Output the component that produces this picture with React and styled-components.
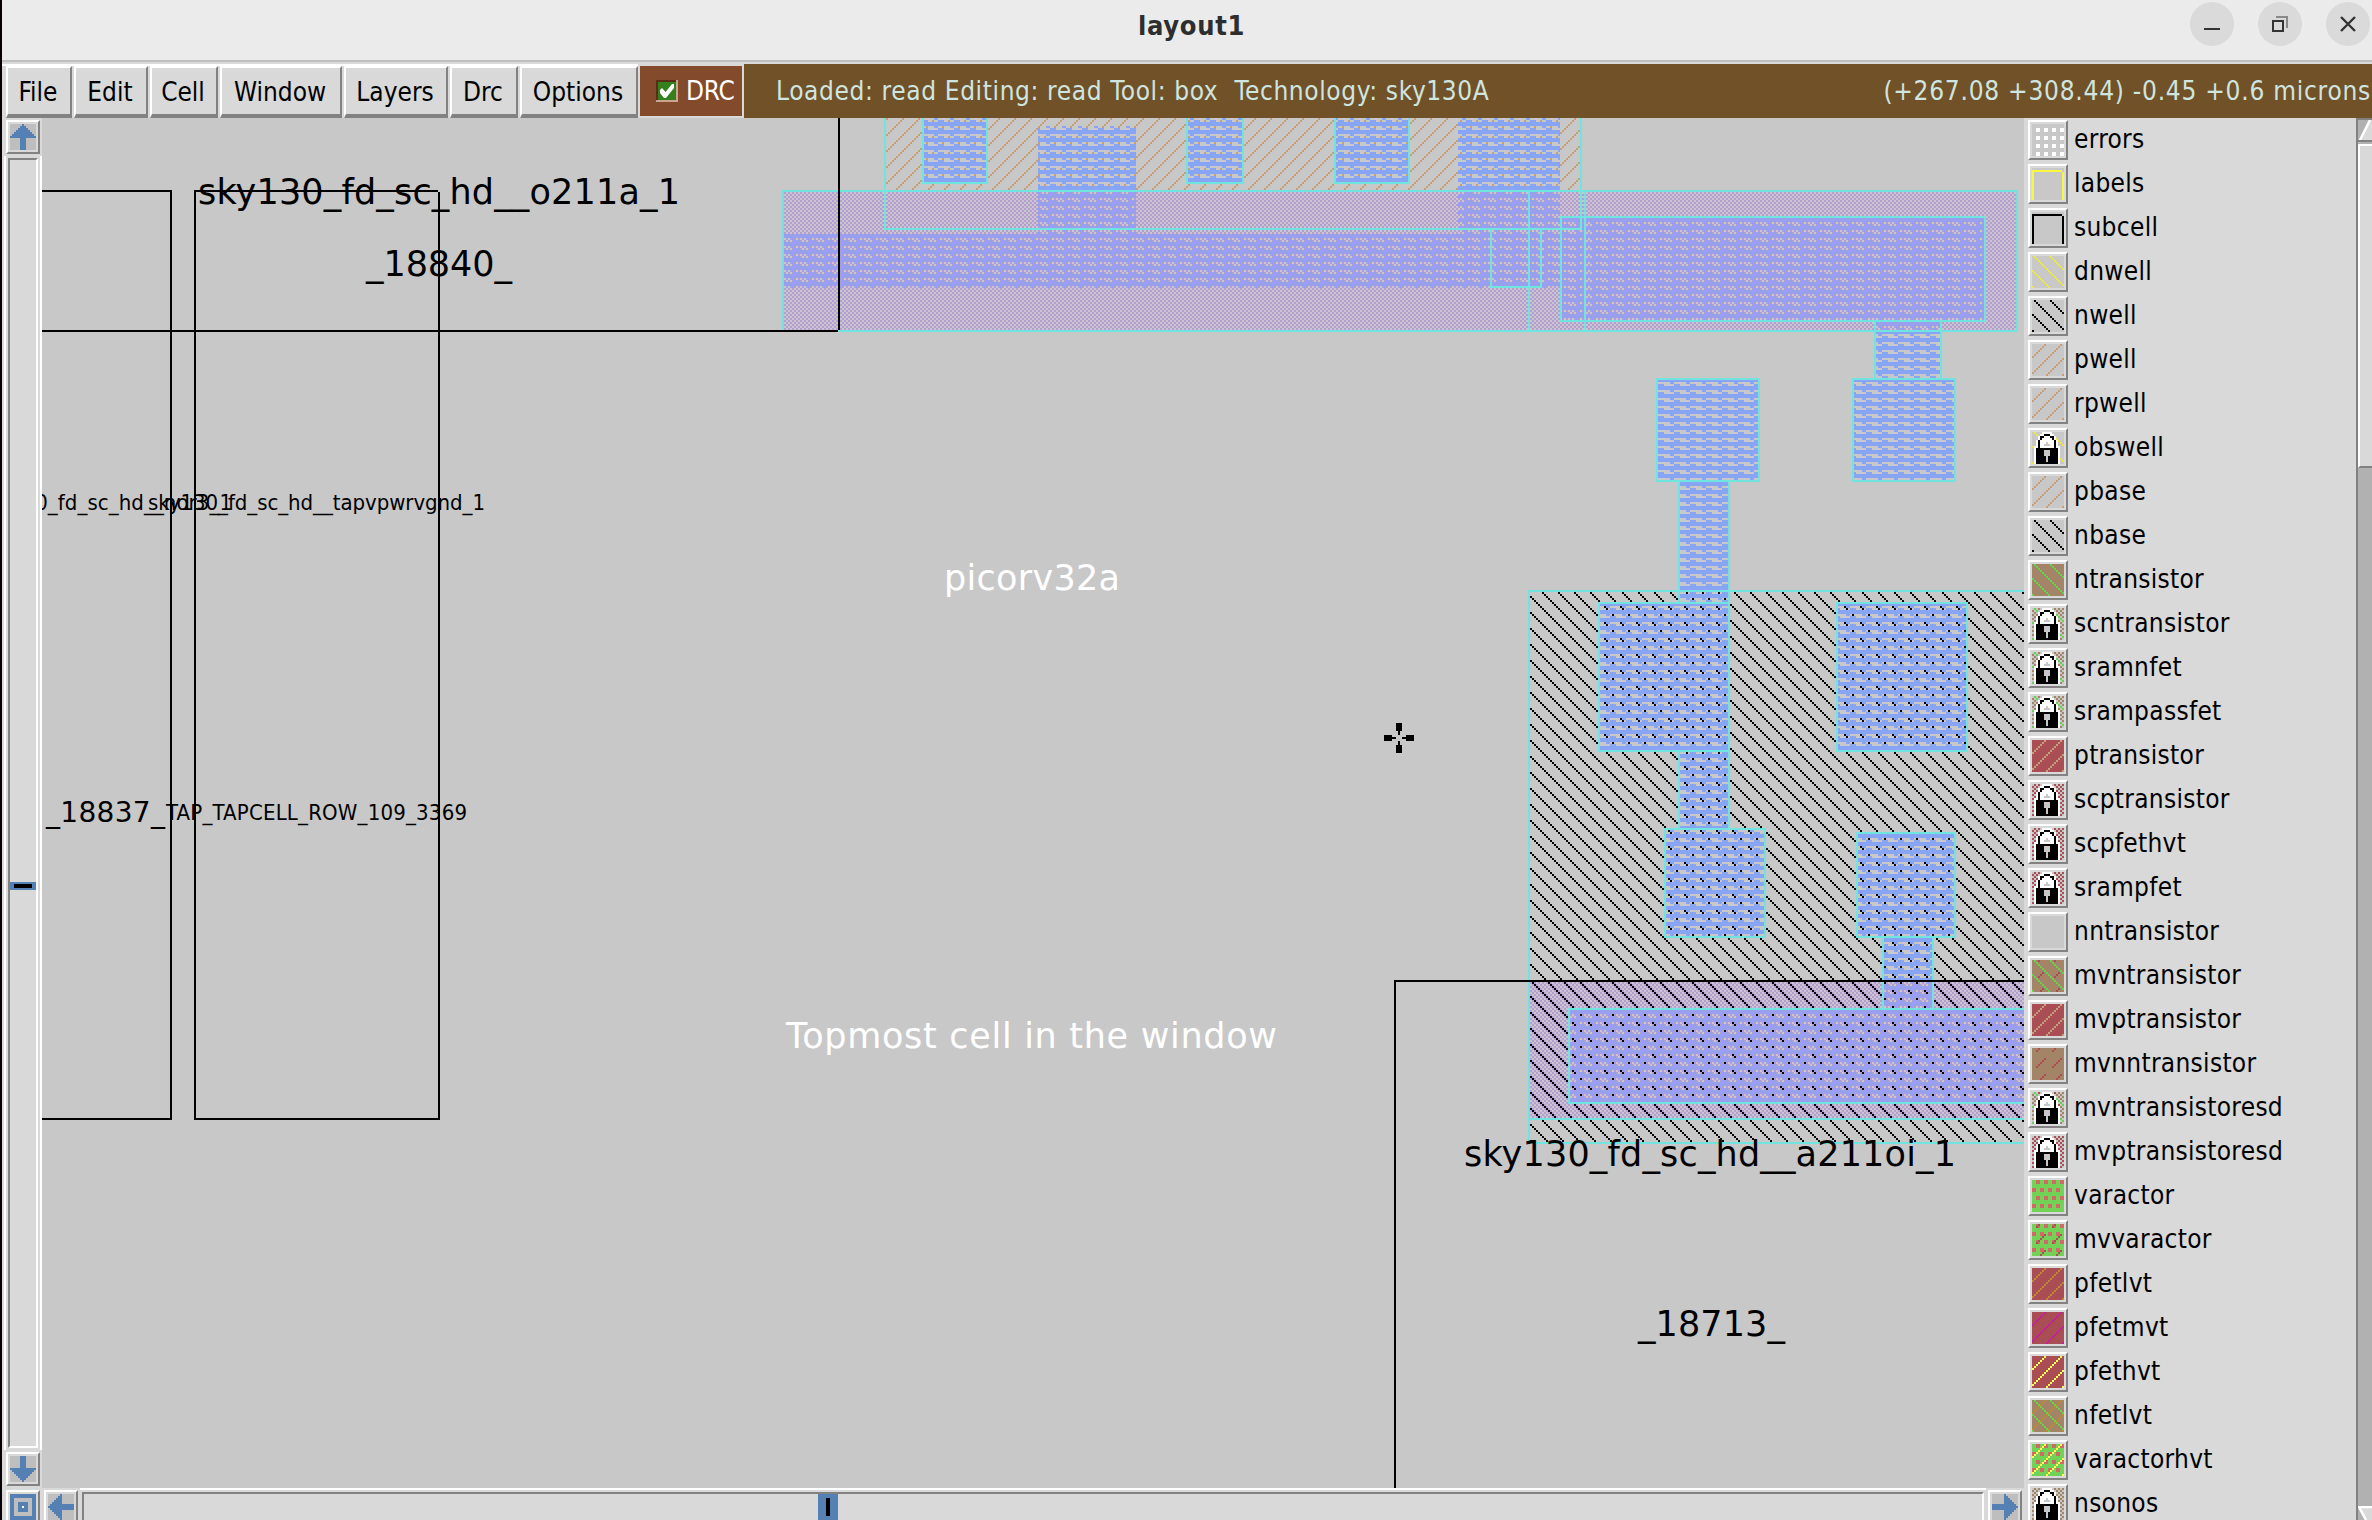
import React from "react";
import styled, { createGlobalStyle } from "styled-components";

const Global = createGlobalStyle`
  html, body { margin: 0; padding: 0; background: #d9d9d9; }
  * { box-sizing: border-box; }
`;

const UI = `"DejaVu Sans Condensed", "DejaVu Sans", sans-serif`;
const FACE = "#d9d9d9";
const DARK = "#828282";
const BLUE = "#5580b3";
const PAPER = "#c8c8c8";

const Window = styled.div`
  width: 2372px;
  height: 1520px;
  overflow: hidden;
  display: flex;
  flex-direction: column;
  background: ${FACE};
  border-left: 2px solid #060006;
  font-family: ${UI};
  font-size: 26px;
  color: #000;
`;

const TitleBar = styled.header`
  height: 62px;
  flex: none;
  display: grid;
  grid-template-columns: 1fr auto 1fr;
  background: #ebebeb;
  border-bottom: 2px solid #bfbfbf;
  padding: 2px 2px 0 0;
`;

const Title = styled.h1`
  grid-column: 2;
  margin: 5px 0 0 11px;
  font: bold 27px/38px ${UI};
  letter-spacing: 0.7px;
  color: #2e2e2e;
`;

const Controls = styled.div`
  display: flex;
  justify-content: flex-end;
  gap: 24px;
`;

const Round = styled.button`
  width: 44px;
  height: 44px;
  padding: 0;
  border: 0;
  border-radius: 50%;
  background: #dadada;
  display: block;
`;

const MenuBar = styled.nav`
  height: 56px;
  flex: none;
  display: flex;
  padding-top: 2px;
`;

const Menus = styled.div`
  display: flex;
  gap: 2px;
  padding-left: 4px;
  width: 636px;
  border-top: 2px solid #fff;
`;

const MenuButton = styled.button`
  width: ${(p) => p.$w}px;
  height: 52px;
  padding: 1px 2px 0 0;
  border: solid;
  border-width: 2px 2px 4px;
  border-color: #fff ${DARK} ${DARK} #fff;
  background: ${FACE};
  font: 26px/44px ${UI};
  color: #000;
`;

const DrcToggle = styled.label`
  width: 102px;
  height: 50px;
  margin: 2px 2px 0 2px;
  padding: 0 0 0 16px;
  display: flex;
  align-items: center;
  gap: 8px;
  background: #834a2c;
  color: #fff;
  font-size: 26px;
  letter-spacing: -0.2px;
`;

const Status = styled.div`
  flex: 1;
  display: flex;
  justify-content: space-between;
  padding: 0 1px 0 32px;
  background: #715127;
  color: #cfe5e0;
  line-height: 55px;
  white-space: pre;
`;

const StatusText = styled.span`
  letter-spacing: ${(p) => p.$ls}px;
`;

const Body = styled.main`
  height: 1402px;
  display: grid;
  grid-template-columns: 40px 1982px 1fr;
`;

const LeftRail = styled.div`
  display: flex;
  flex-direction: column;
  padding-top: 2px;
`;

const Bevel = styled.div`
  width: 34px;
  height: 34px;
  flex: none;
  margin: ${(p) => p.$m || "0"};
  border: 2px solid;
  border-color: #fff ${DARK} ${DARK} #fff;
  padding: 2px;
  svg { display: block; background: #bebebe; }
`;

const VTrack = styled.div`
  height: 1294px;
  margin: 2px 0 2px 2px;
  border: solid #fff;
  border-width: 0 2px;
  padding: 2px;
`;

const VTrough = styled.div`
  width: 30px;
  height: 1290px;
  border: 2px solid;
  border-color: ${DARK} #fff #fff ${DARK};
  padding-top: 722px;
`;

const VThumb = styled.div`
  width: 26px;
  height: 8px;
  background: #000;
  border: solid ${BLUE};
  border-width: 2px 4px;
`;

const Center = styled.section`
  display: flex;
  flex-direction: column;
`;

const HRail = styled.div`
  height: 32px;
  display: flex;
`;

const HTrack = styled.div`
  width: 1906px;
  height: 40px;
  border-top: 2px solid #fff;
  padding: 2px 2px 0;
`;

const HTrough = styled.div`
  height: 36px;
  border: 2px solid;
  border-color: ${DARK} #fff #fff ${DARK};
  padding-left: 734px;
`;

const HThumb = styled.div`
  width: 20px;
  height: 26px;
  background: #000;
  border: solid ${BLUE};
  border-width: 4px 8px;
`;

const LayerPanel = styled.aside`
  display: flex;
  justify-content: space-between;
  height: 1402px;
  overflow: hidden;
`;

const LayerList = styled.ul`
  list-style: none;
  margin: 0;
  padding: 2px 0 0 4px;
  display: flex;
  flex-direction: column;
  gap: 4px;
`;

const LayerRow = styled.li`
  display: flex;
  height: 40px;
  align-items: center;
`;

const LayerName = styled.span`
  margin-left: 6px;
  line-height: 38px;
  padding-bottom: 2px;
  letter-spacing: 0.3px;
`;

const Swatch = styled.div`
  width: 40px;
  height: 40px;
  border: 2px solid;
  border-color: #fff ${DARK} ${DARK} #fff;
  padding: 2px;
  svg { display: block; }
`;

const ScrollBar = styled.div`
  width: 16px;
  height: 1402px;
  background: #b1b1b1;
  border-left: 2px solid ${DARK};
  border-top: 2px solid ${DARK};
  display: flex;
  flex-direction: column;
  svg { display: block; flex: none; }
`;

const ScrollThumb = styled.div`
  height: 324px;
  flex: none;
  background: ${FACE};
  border: solid;
  border-width: 2px 0 2px 2px;
  border-color: #fff ${DARK} ${DARK} #fff;
`;

const Spacer = styled.div`
  flex: 1;
`;

const Icon = ({ d, size = 26, children }) => (
  <svg width={size} height={size} viewBox="0 0 13 13" shapeRendering="crispEdges">
    {d && <path d={d} fill={BLUE} />}
    {children}
  </svg>
);

const ARROW_UP = "M6 0h1v1h1v1h1v1h1v1h1v1h1v1h1v1H8v6H5V7H0V6h1V5h1V4h1V3h1V2h1V1h1z";

const Arrow = ({ turn }) => (
  <Icon>
    <path d={ARROW_UP} fill={BLUE} transform={`rotate(${turn} 6.5 6.5)`} />
  </Icon>
);

const pixels = (list, w = 1, h = 1) => list.map(([x, y]) => `M${x} ${y}h${w}v${h}h-${w}z`).join("");
const range = (n) => Array.from({ length: n }, (_, i) => i);
const BACK = pixels(range(8).map((y) => [(y + 1) % 8, y]));
const FWD = pixels(range(8).map((y) => [(14 - y) % 8, y]));
const SEG = pixels([[6, 5], [5, 6], [4, 7], [3, 0], [2, 1]]);
const DOTS = pixels([[2, 2], [6, 2], [2, 6], [6, 6]], 2, 2);
const SQUARES = pixels([[2, 0], [6, 0], [0, 4], [4, 4]], 2, 2);
const CHECK = pixels(range(16).flatMap((y) => range(8).map((i) => [i * 2 + (y % 2), y])));

const tile = (d) => [0, 8].flatMap((x) => [0, 8].map((y) => [x, y])).map(([x, y]) => (
  <path key={`${x}-${y}`} d={d} transform={`translate(${x} ${y})`} />
));

const C = {
  brown: "#a48467", green: "#64d44e", red: "#ab4d55", tan: "#c4a07a", yellow: "#f0e83c",
  gold: "#bd8a30", magenta: "#bd239b", lemon: "#ffff50",
};

const LAYERS = [
  { name: "errors", art: [[DOTS, "#fff"]] },
  { name: "labels", frame: "#f8f840" },
  { name: "subcell", frame: "#000" },
  { name: "dnwell", art: [[BACK, C.yellow]] },
  { name: "nwell", art: [[BACK, "#000"]] },
  { name: "pwell", art: [[FWD, C.tan]] },
  { name: "rpwell", art: [[FWD, C.tan]] },
  { name: "obswell", art: [[BACK, C.yellow]], locked: true },
  { name: "pbase", art: [[FWD, C.tan]] },
  { name: "nbase", art: [[BACK, "#000"]] },
  { name: "ntransistor", bg: C.brown, art: [[BACK, C.green]] },
  { name: "scntransistor", bg: C.brown, art: [[BACK, C.green]], locked: true },
  { name: "sramnfet", bg: C.brown, art: [[BACK, C.green]], locked: true },
  { name: "srampassfet", bg: C.brown, art: [[BACK, C.green]], locked: true },
  { name: "ptransistor", bg: C.red, art: [[FWD, C.tan]] },
  { name: "scptransistor", bg: C.red, art: [[FWD, C.tan]], locked: true },
  { name: "scpfethvt", bg: C.red, art: [[FWD, C.lemon]], locked: true },
  { name: "srampfet", bg: C.red, art: [[FWD, C.tan]], locked: true },
  { name: "nntransistor" },
  { name: "mvntransistor", bg: C.brown, art: [[SEG, C.red], [BACK, C.green]] },
  { name: "mvptransistor", bg: C.red, art: [[FWD, C.tan]] },
  { name: "mvnntransistor", bg: C.brown, art: [[SEG, C.red]] },
  { name: "mvntransistoresd", bg: C.brown, art: [[SEG, C.red], [BACK, C.green]], locked: true },
  { name: "mvptransistoresd", bg: C.red, art: [[FWD, C.tan]], locked: true },
  { name: "varactor", bg: "#72d258", art: [[SQUARES, "#cf6b64"]] },
  { name: "mvvaractor", bg: "#72d258", art: [[SQUARES, "#cf6b64"], [SEG, C.red]] },
  { name: "pfetlvt", bg: C.red, art: [[FWD, C.gold]] },
  { name: "pfetmvt", bg: C.red, art: [[FWD, C.magenta]] },
  { name: "pfethvt", bg: C.red, art: [[FWD, C.lemon]] },
  { name: "nfetlvt", bg: C.brown, art: [[FWD, C.gold], [BACK, C.green]] },
  { name: "varactorhvt", bg: "#72d258", art: [[SQUARES, "#cf6b64"], [FWD, C.lemon]] },
  { name: "nsonos", bg: C.brown, art: [[FWD, C.magenta]], locked: true },
];

const Lock = () => (
  <>
    <path d="M5 0h5v1h1v1h1v2h1v3h1v9H1V7h1V4h1V2h1V1h1z" fill="#fff" />
    <path d="M6 1h3v1h2v2h1v4h1v8H2V8h1V4h1V2h2z" fill="#000" />
    <path d="M6 2h3v1h1v1h1v4H4V4h1V3h1z" fill="#fff" />
    <path d="M6 9h3v3H8v3H7v-3H6zM7 5h1v1h1v1H6V6h1z" fill={PAPER} />
  </>
);

const LayerSwatch = ({ layer }) => (
  <Swatch>
    <svg width="32" height="32" viewBox="0 0 16 16" shapeRendering="crispEdges">
      <rect width="16" height="16" fill={layer.bg || PAPER} />
      {(layer.art || []).map(([d, fill], i) => <g key={i} fill={fill}>{tile(d)}</g>)}
      {layer.frame && <path d="M0 1h15v1h-14v14h-1zM15 2h1v14h-1z" fill={layer.frame} />}
      {layer.locked && <path d={CHECK} fill={PAPER} />}
      {layer.locked && <Lock />}
    </svg>
  </Swatch>
);

const METAL_ROWS = "M3 0h2v1h-2zM5 1h3v1h-3zM0 2h8v2h-8z";
const METAL_MIX = pixels([[3, 0], [6, 1], [1, 2], [3, 2], [5, 2], [7, 2], [0, 3], [2, 3], [4, 3], [6, 3]]);

const Pattern = ({ id, w = 8, h = 8, x = 0, y = 0, children }) => (
  <pattern id={id} width={w} height={h} patternUnits="userSpaceOnUse" patternTransform={`translate(${x} ${y}) scale(2)`}>
    {children}
  </pattern>
);

const fills = {
  metal: [
    [924, 118, 62, 64], [1188, 118, 54, 64], [1336, 118, 72, 64], [1038, 126, 98, 66], [1458, 118, 102, 72],
    [1876, 332, 64, 46], [1854, 380, 100, 100], [1658, 380, 100, 100], [1680, 482, 48, 120],
    [1600, 604, 128, 146], [1838, 604, 128, 146], [1680, 752, 48, 76], [1666, 830, 98, 106],
    [1858, 834, 96, 102], [1884, 938, 48, 42],
  ],
  mixed: [
    [1038, 192, 98, 42], [1458, 192, 102, 42], [784, 234, 776, 54], [1562, 218, 422, 102],
    [1876, 322, 64, 8], [1884, 982, 48, 26], [1570, 1010, 454, 92],
  ],
};

const CYAN_BOXES = [
  [922, 80, 66, 104], [1186, 80, 58, 104], [1334, 80, 76, 104], [884, 80, 698, 150],
  [1490, 228, 52, 60], [1560, 216, 426, 106],
  [1874, 320, 68, 60], [1852, 378, 104, 104], [1656, 378, 104, 104], [1678, 480, 52, 124],
  [1528, 590, 560, 554], [1598, 602, 132, 150], [1836, 602, 132, 150], [1678, 750, 52, 80],
  [1664, 828, 102, 110], [1856, 832, 100, 106], [1882, 936, 52, 74],
  [1568, 1008, 500, 96],
];
const CYAN_LINES = [
  [782, 190, 2, 140], [782, 190, 1236, 2], [2016, 190, 2, 142], [838, 330, 1180, 2],
  [1528, 190, 2, 140], [1584, 190, 2, 140], [1530, 1118, 494, 2],
];
const BLACK_LINES = [
  [838, 118, 2, 212], [42, 330, 796, 2], [42, 190, 128, 2], [170, 190, 2, 930], [42, 1118, 128, 2],
  [194, 190, 2, 930], [196, 190, 242, 2], [438, 192, 2, 928], [194, 1118, 244, 2],
  [1394, 980, 630, 2], [1394, 980, 2, 508],
];

const WIDE = `"DejaVu Sans", sans-serif`;
const LABELS = [
  { t: "sky130_fd_sc_hd__o211a_1", x: 198, y: 204, w: 482, s: 35 },
  { t: "_18840_", x: 366, y: 276, w: 146, s: 35 },
  { t: "sky130_fd_sc_hd__nor3_1", x: -23, y: 510, w: 255, s: 22, face: UI },
  { t: "sky130_fd_sc_hd__tapvpwrvgnd_1", x: 148, y: 510, w: 337, s: 22, face: UI },
  { t: "_18837_", x: 46, y: 822, w: 119, s: 28 },
  { t: "TAP_TAPCELL_ROW_109_3369", x: 166, y: 820, w: 301, s: 22, face: UI },
  { t: "picorv32a", x: 944, y: 590, w: 176, s: 35, fill: "#fff" },
  { t: "Topmost cell in the window", x: 786, y: 1048, w: 491, s: 35, fill: "#fff" },
  { t: "sky130_fd_sc_hd__a211oi_1", x: 1464, y: 1166, w: 492, s: 35 },
  { t: "_18713_", x: 1638, y: 1336, w: 147, s: 35 },
];

const Rects = ({ list, fill }) => (
  <g fill={fill}>{list.map(([x, y, w, h], i) => <rect key={i} x={x} y={y} width={w} height={h} />)}</g>
);

const Drawing = styled.svg`
  display: block;
`;

const LayoutCanvas = () => (
  <Drawing width="1982" height="1370" viewBox="42 118 1982 1370" shapeRendering="crispEdges">
    <defs>
      <Pattern id="metal" h={4} y={118}><path d={METAL_ROWS} fill="#88a4f5" /></Pattern>
      <Pattern id="mixed" h={4} y={118}>
        <path d={METAL_ROWS} fill="#88a4f5" />
        <path d={METAL_MIX} fill="#ab9ae6" />
      </Pattern>
      <Pattern id="poly" w={2} h={2}><path d="M0 0h1v1h-1zM1 1h1v1h-1z" fill="#b79bd8" /></Pattern>
      <Pattern id="pwell"><path d={FWD} fill={C.tan} /></Pattern>
      <Pattern id="nwell"><path d={pixels(range(8).map((y) => [(y + 3) % 8, y]))} fill="#000" /></Pattern>
    </defs>
    <rect x="42" y="118" width="1982" height="1370" fill={PAPER} />
    <Rects fill="url(#pwell)" list={[[886, 118, 694, 72]]} />
    <Rects fill="url(#poly)" list={[[784, 192, 1232, 138], [1530, 982, 494, 136]]} />
    <Rects fill="url(#nwell)" list={[[1530, 592, 494, 550]]} />
    <Rects fill="url(#metal)" list={fills.metal} />
    <Rects fill="url(#mixed)" list={fills.mixed} />
    <g fill="none" stroke="#70e4de" strokeWidth="2">
      {CYAN_BOXES.map(([x, y, w, h], i) => <rect key={i} x={x + 1} y={y + 1} width={w - 2} height={h - 2} />)}
    </g>
    <Rects fill="#70e4de" list={CYAN_LINES} />
    <Rects fill="#000" list={BLACK_LINES} />
    {LABELS.map((l) => (
      <text key={l.t} x={l.x} y={l.y} textLength={l.w} fontSize={l.s} fontFamily={l.face || WIDE} fill={l.fill || "#000"}>
        {l.t}
      </text>
    ))}
    <Rects
      fill="#000"
      list={[
        [1396, 723, 6, 8], [1398, 731, 2, 4], [1396, 745, 6, 8], [1398, 741, 2, 4],
        [1384, 735, 8, 6], [1392, 737, 4, 2], [1406, 735, 8, 6], [1402, 737, 4, 2],
      ]}
    />
  </Drawing>
);

const MENUS = [["File", 66], ["Edit", 74], ["Cell", 68], ["Window", 122], ["Layers", 104], ["Drc", 68], ["Options", 118]];

export default function App() {
  return (
    <Window>
      <Global />
      <TitleBar>
        <Title>layout1</Title>
        <Controls>
          <Round><svg width="44" height="44"><path d="M14 27h16" stroke="#333" strokeWidth="2" /></svg></Round>
          <Round>
            <svg width="44" height="44" fill="none" strokeWidth="2">
              <path d="M18 15h11v11" stroke="#888" />
              <rect x="15" y="19" width="10" height="10" stroke="#333" />
            </svg>
          </Round>
          <Round><svg width="44" height="44"><path d="M15 15l14 14M29 15L15 29" stroke="#333" strokeWidth="2.4" /></svg></Round>
        </Controls>
      </TitleBar>
      <MenuBar>
        <Menus>
          {MENUS.map(([t, w]) => <MenuButton key={t} $w={w}>{t}</MenuButton>)}
        </Menus>
        <DrcToggle>
          <svg width="22" height="22" viewBox="0 0 11 11" shapeRendering="crispEdges">
            <rect width="11" height="11" fill="#5a2d1a" />
            <path d="M11 0v11H0v-1h10V0z" fill="#c9a58f" />
            <rect x="1" y="1" width="9" height="9" fill="#34801c" />
            <path d="M2 5l1-1l1.8 2L8 2h1v2L5 9H4L2 6.500z" fill="#fff" shapeRendering="auto" />
          </svg>
          DRC
        </DrcToggle>
        <Status>
          <StatusText $ls={0.62}>Loaded: read Editing: read Tool: box  Technology: sky130A</StatusText>
          <StatusText $ls={0.75}>(+267.08 +308.44) -0.45 +0.6 microns</StatusText>
        </Status>
      </MenuBar>
      <Body>
        <LeftRail>
          <Bevel $m="0 0 0 4px"><Arrow turn={0} /></Bevel>
          <VTrack><VTrough><VThumb /></VTrough></VTrack>
          <Bevel $m="0 0 4px 4px"><Arrow turn={180} /></Bevel>
          <Bevel $m="0 0 0 4px">
            <Icon d="M0 0h13v13H0z">
              <path d="M2 2h9v9H2z" fill="#bebebe" />
              <path d="M4 4h5v5H4z" fill={BLUE} />
              <path d="M6 6h1v1H6z" fill="#fff" />
            </Icon>
          </Bevel>
        </LeftRail>
        <Center>
          <LayoutCanvas />
          <HRail>
            <Bevel $m="2px 2px 0 2px"><Arrow turn={270} /></Bevel>
            <HTrack><HTrough><HThumb /></HTrough></HTrack>
            <Bevel $m="2px 2px 0 2px"><Arrow turn={90} /></Bevel>
          </HRail>
        </Center>
        <LayerPanel>
          <LayerList>
            {LAYERS.map((l) => (
              <LayerRow key={l.name}>
                <LayerSwatch layer={l} />
                <LayerName>{l.name}</LayerName>
              </LayerRow>
            ))}
          </LayerList>
          <ScrollBar>
            <svg width="14" height="24" viewBox="0 0 14 24">
              <path d="M0 22L12 0h2v22z" fill={FACE} />
              <path d="M1 22L12 0" stroke="#fff" strokeWidth="2.5" />
              <path d="M0 21h14" stroke={DARK} strokeWidth="2" />
            </svg>
            <ScrollThumb />
            <Spacer />
            <svg width="14" height="14" viewBox="0 0 14 14">
              <path d="M0 0h14v14H8z" fill={FACE} />
              <path d="M1 1l7 13M0 1h14" stroke="#fff" strokeWidth="2.5" />
            </svg>
          </ScrollBar>
        </LayerPanel>
      </Body>
    </Window>
  );
}
